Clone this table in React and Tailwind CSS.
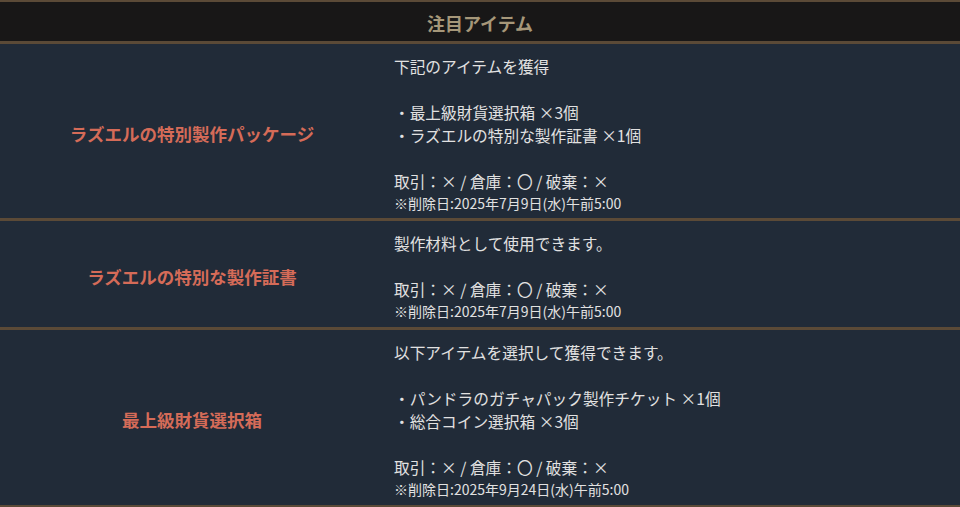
export default function App() {
  const font = { fontFamily: '"Noto Sans CJK JP", "Noto Sans", sans-serif' };
  const rows = [
    {
      title: "ラズエルの特別製作パッケージ",
      h: "h-[177px]",
      lines: ["下記のアイテムを獲得", "", "・最上級財貨選択箱 ×3個", "・ラズエルの特別な製作証書 ×1個", "", "取引：× / 倉庫：〇 / 破棄：×"],
      date: "※削除日:2025年7月9日(水)午前5:00",
    },
    {
      title: "ラズエルの特別な製作証書",
      h: "h-[109px]",
      lines: ["製作材料として使用できます。", "", "取引：× / 倉庫：〇 / 破棄：×"],
      date: "※削除日:2025年7月9日(水)午前5:00",
    },
    {
      title: "最上級財貨選択箱",
      h: "h-[177px]",
      lines: ["以下アイテムを選択して獲得できます。", "", "・パンドラのガチャパック製作チケット ×1個", "・総合コイン選択箱 ×3個", "", "取引：× / 倉庫：〇 / 破棄：×"],
      date: "※削除日:2025年9月24日(水)午前5:00",
    },
  ];
  return (
    <div className="w-[960px] h-[507px] bg-[#212b38] overflow-hidden" style={font}>
      <div className="h-[44px] bg-[#181717] border-t-2 border-b-[3px] border-[#5b4a37] flex items-center justify-center">
        <span className="text-[18px] font-bold text-[#a69779] pt-[4px]">注目アイテム</span>
      </div>
      {rows.map((r, i) => (
        <div key={i} className={`flex ${r.h} ${i < rows.length - 1 ? "border-b-[3px]" : "border-b-2"} border-[#5b4a37] bg-[#212b38]`}>
          <div className="w-[384px] flex items-center justify-center">
            <span className="text-[17.5px] font-bold text-[#d56b58] pt-[6px]">{r.title}</span>
          </div>
          <div className="flex-1 pl-[10px] pt-[11px] text-[#e1e1e1]">
            {r.lines.map((l, j) => (
              <div key={j} className="text-[15.7px] leading-[23px] h-[23px] whitespace-pre">{l}</div>
            ))}
            <div className="text-[14px] leading-[19px] pt-[1px]">{r.date}</div>
          </div>
        </div>
      ))}
    </div>
  );
}
